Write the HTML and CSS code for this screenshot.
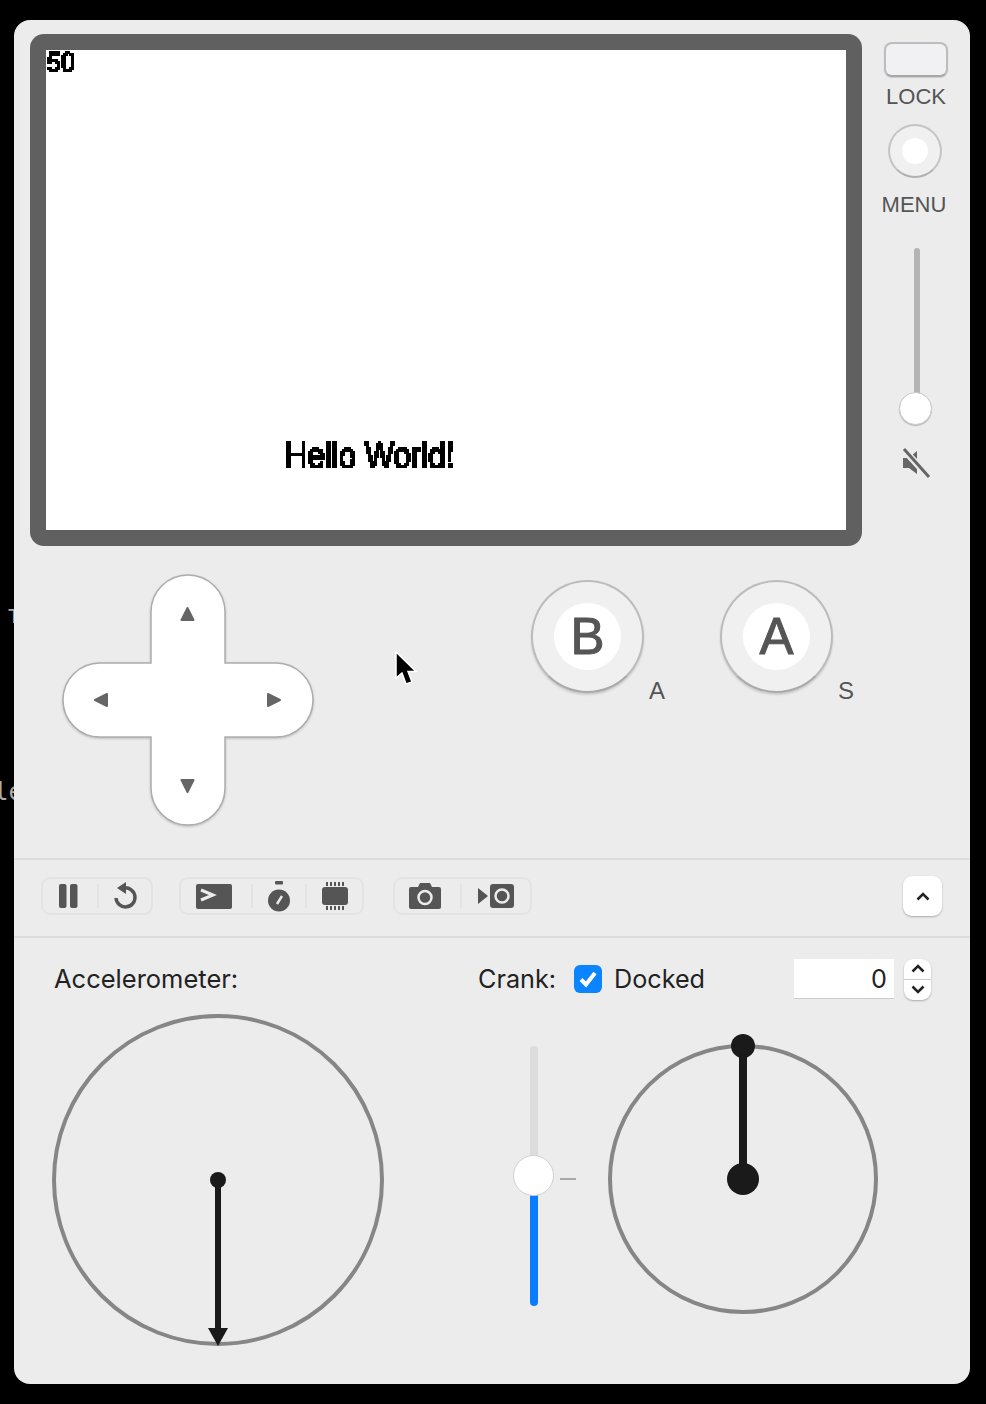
FILE: index.html
```html
<!DOCTYPE html>
<html>
<head>
<meta charset="utf-8">
<title>Playdate Simulator</title>
<link rel="stylesheet" href="styles.css">
</head>
<body>

<svg class="defs" width="0" height="0">
  <filter id="pixelate" x="0" y="0" width="100%" height="100%" primitiveUnits="userSpaceOnUse" color-interpolation-filters="sRGB">
    <feFlood x="0" y="0" width="1" height="1" flood-color="#000"/>
    <feComposite width="2" height="2"/>
    <feTile result="grid"/>
    <feComposite in="SourceAlpha" in2="grid" operator="in"/>
    <feMorphology operator="dilate" radius="1"/>
    <feComponentTransfer>
      <feFuncA type="discrete" tableValues="0 0 1 1"/>
    </feComponentTransfer>
  </filter>
</svg>

<div class="behind behind-t">T</div>
<div class="behind behind-le">le</div>

<div class="window">

  <div class="device">
    <div class="screen-row">
      <div class="bezel">
        <div class="screen">
          <div class="fps"><span>50</span></div>
          <div class="hello"><span>Hello World!</span></div>
        </div>
      </div>
      <div class="side">
        <div class="lock-btn"></div>
        <div class="side-label lock-label">LOCK</div>
        <div class="menu-btn"><div class="menu-dot"></div></div>
        <div class="side-label menu-label">MENU</div>
        <div class="volume">
          <div class="volume-track"></div>
          <div class="volume-thumb"></div>
        </div>
        <svg class="mute" width="30" height="32" viewBox="0 0 30 32">
          <path d="M2 11H8L16 4V27L8 21H2Z" fill="#666"/>
          <path d="M3 3L27 29" stroke="#ececec" stroke-width="7"/>
          <path d="M3 2L28 30" stroke="#666" stroke-width="3"/>
        </svg>
      </div>
    </div>

    <div class="controls">
      <svg class="dpad" width="252" height="254" viewBox="0 0 252 254">
        <path class="dpad-body" d="M89 38A37 37 0 0 1 163 38V89H214A37 37 0 0 1 214 163H163V214A37 37 0 0 1 89 214V163H38A37 37 0 0 1 38 89H89Z"/>
        <g class="dpad-arrows">
          <path d="M125.500 34L131.500 46H119.500Z"/>
          <path d="M33 126L45 120V132Z"/>
          <path d="M218 126L206 120V132Z"/>
          <path d="M125.500 218L119.500 206H131.500Z"/>
        </g>
      </svg>
      <div class="face-buttons">
        <div class="face">
          <div class="face-btn"><div class="face-cap">B</div></div>
          <div class="face-key">A</div>
        </div>
        <div class="face">
          <div class="face-btn"><div class="face-cap">A</div></div>
          <div class="face-key">S</div>
        </div>
      </div>
    </div>

    <svg class="cursor" width="24" height="36" viewBox="0 0 24 36">
      <path d="M2 1V27L8 22L12 33L18 31L14 20.500H22Z" fill="#000" stroke="#fff" stroke-width="1.500"/>
    </svg>
  </div>

  <div class="toolbar">
    <div class="tool-group">
      <div class="tool w54 lean">
        <svg width="20" height="24" viewBox="0 0 20 24"><rect x="1" y="0" width="7.500" height="24" rx="2"/><rect x="12" y="0" width="7.500" height="24" rx="2"/></svg>
      </div>
      <div class="tool w54 sep">
        <svg width="24" height="28" viewBox="0 0 24 28">
          <path class="stroke" d="M11 6A9.500 9.500 0 1 1 3 16"/>
          <path d="M13 0V12L4 6Z"/>
        </svg>
      </div>
    </div>
    <div class="tool-group">
      <div class="tool w70 lean">
        <svg width="36" height="25" viewBox="0 0 36 25">
          <rect width="36" height="25" rx="2"/>
          <path class="cut cut-bold" d="M5 6L17 11L5 16" />
        </svg>
      </div>
      <div class="tool w54 sep">
        <svg width="22" height="31" viewBox="0 0 22 31">
          <rect x="7" y="0" width="8" height="3.500" rx="1"/>
          <circle cx="11" cy="19.500" r="11"/>
          <path class="cut" d="M9 23L14 15"/>
        </svg>
      </div>
      <div class="tool w57 sep">
        <svg width="26" height="28" viewBox="0 0 26 28">
          <rect x="0" y="5" width="26" height="18" rx="3"/>
          <path class="ticks" d="M5 0V4M9 0V4M13 0V4M17 0V4M21 0V4M5 24V28M9 24V28M13 24V28M17 24V28M21 24V28"/>
        </svg>
      </div>
    </div>
    <div class="tool-group tool-group-media">
      <div class="tool w65 lean-more">
        <svg width="32" height="26" viewBox="0 0 32 26">
          <path d="M2 4H9L11 0H21L23 4H30Q32 4 32 6V24Q32 26 30 26H2Q0 26 0 24V6Q0 4 2 4Z"/>
          <circle class="cut" cx="16" cy="14.500" r="6.500"/>
        </svg>
      </div>
      <div class="tool w70 sep">
        <svg width="36" height="24" viewBox="0 0 36 24">
          <path d="M0 4L10 12L0 20Z"/>
          <rect x="12" y="0" width="24" height="24" rx="3"/>
          <circle class="cut" cx="24" cy="12" r="6.500"/>
        </svg>
      </div>
    </div>
    <div class="expand">
      <svg width="14" height="9" viewBox="0 0 14 9"><path d="M1.500 7.500L7 2L12.500 7.500" fill="none" stroke="#222" stroke-width="2.500"/></svg>
    </div>
  </div>

  <div class="panel">
    <div class="accel">
      <div class="panel-label accel-label">Accelerometer:</div>
      <svg class="accel-dial" width="332" height="332" viewBox="0 0 332 332">
        <circle cx="166" cy="166" r="164" fill="none" stroke="#868686" stroke-width="4"/>
        <circle cx="166" cy="166" r="8" fill="#1a1a1a"/>
        <path d="M166 166V316" stroke="#1a1a1a" stroke-width="6"/>
        <path d="M156 314H176L166 332Z" fill="#1a1a1a"/>
      </svg>
    </div>
    <div class="crank">
      <div class="crank-head">
        <div class="panel-label">Crank:</div>
        <div class="check">
          <svg width="20" height="18" viewBox="0 0 20 18"><path d="M3 9.500L8 14.500L17 3" fill="none" stroke="#fff" stroke-width="4"/></svg>
        </div>
        <div class="panel-label">Docked</div>
        <div class="angle">0</div>
        <div class="stepper">
          <div class="step">
            <svg width="14" height="9" viewBox="0 0 14 9"><path d="M1.500 7.500L7 2L12.500 7.500" fill="none" stroke="#222" stroke-width="2.500"/></svg>
          </div>
          <div class="step step-down">
            <svg width="14" height="9" viewBox="0 0 14 9"><path d="M1.500 1.500L7 7L12.500 1.500" fill="none" stroke="#222" stroke-width="2.500"/></svg>
          </div>
        </div>
      </div>
      <div class="crank-body">
        <div class="crank-slider">
          <div class="crank-track"></div>
          <div class="crank-fill"></div>
          <div class="crank-thumb"></div>
        </div>
        <div class="crank-tick"></div>
        <svg class="crank-dial" width="272" height="284" viewBox="0 0 272 284">
          <circle cx="136" cy="147" r="133" fill="none" stroke="#868686" stroke-width="4"/>
          <path d="M136 147V14" stroke="#1a1a1a" stroke-width="8"/>
          <circle cx="136" cy="14" r="12" fill="#1a1a1a"/>
          <circle cx="136" cy="147" r="16" fill="#1a1a1a"/>
        </svg>
      </div>
    </div>
  </div>

</div>

</body>
</html>
```

FILE: styles.css
```css
* { box-sizing: border-box; }

html, body {
  margin: 0;
  height: 1404px;
  overflow: hidden;
}

body {
  position: relative;
  background: #000;
  padding: 20px 16px 20px 14px;
  font-family: "Liberation Sans", Arial, sans-serif;
}

.defs { position: absolute; }

/* terminal text peeking out from behind the window */
.behind {
  position: absolute;
  font-family: "DejaVu Sans Mono", monospace;
  color: #aaa;
}
.behind-t { left: 8px; top: 604px; font-size: 20px; line-height: 24px; }
.behind-le { left: -6px; top: 777px; font-size: 24px; line-height: 30px; }

.window {
  position: relative;
  height: 1364px;
  background: #ececec;
  border-radius: 16px;
  overflow: hidden;
}

/* top part */
.device { position: relative; height: 838px; }

.screen-row {
  display: flex;
  align-items: flex-start;
  padding: 14px 0 0 16px;
}

.bezel {
  width: 832px;
  height: 512px;
  padding: 16px;
  background: #606060;
  border-radius: 14px;
}

.screen {
  position: relative;
  width: 800px;
  height: 480px;
  background: #fff;
  overflow: hidden;
}

.fps, .hello {
  position: absolute;
  filter: url(#pixelate);
  color: #000;
}
.fps {
  left: 0;
  top: 0;
  width: 40px;
  height: 32px;
  font-size: 25px;
  -webkit-text-stroke: 0.4px #000;
}
.fps span {
  display: block;
  transform-origin: 0 0;
  transform: translate(1px, -1px) scaleY(1.16);
  line-height: 22px;
}
.hello {
  left: 239px;
  top: 388px;
  width: 176px;
  height: 40px;
  font-size: 31.200px;
  -webkit-text-stroke: 0.6px #000;
  white-space: nowrap;
}
.hello span {
  display: block;
  transform-origin: 0 0;
  transform: scaleY(1.2);
  line-height: 30px;
}

.side {
  flex: 1;
  display: flex;
  flex-direction: column;
  align-items: center;
  margin-top: 8px;
}

.lock-btn {
  width: 64px;
  height: 35px;
  background: #f1f1f3;
  border: 2px solid #bdbdbd;
  border-bottom-color: #a8a8a8;
  border-radius: 8px;
  box-shadow: 0 1px 1px #ccc;
}

.side-label {
  font-size: 22px;
  line-height: 26px;
  color: #555;
}
.lock-label { margin-top: 7px; }
.menu-label { margin-top: 14px; margin-right: 4px; }

.menu-btn {
  display: flex;
  align-items: center;
  justify-content: center;
  width: 54px;
  height: 54px;
  margin-top: 14px;
  margin-right: 2px;
  background: #f0f0f0;
  border: 2px solid #c4c4c4;
  border-bottom-color: #b0b0b0;
  border-radius: 50%;
}
.menu-dot {
  width: 26px;
  height: 26px;
  background: #fff;
  border-radius: 50%;
}

.volume {
  position: relative;
  width: 34px;
  height: 176px;
  margin-top: 30px;
}
.volume-track {
  width: 6px;
  height: 150px;
  margin-left: 15px;
  background: #b4b4b4;
  border-radius: 3px;
}
.volume-thumb {
  position: absolute;
  left: 0;
  top: 144px;
  width: 33px;
  height: 33px;
  background: #fff;
  border: 1px solid #c8c8c8;
  border-radius: 50%;
  box-shadow: 0 1px 1px #bbb;
}
.mute { margin-top: 23px; }

.controls {
  display: flex;
  align-items: flex-start;
}

.dpad {
  margin: 28px 0 0 48px;
  overflow: visible;
}
.dpad-body {
  fill: #fff;
  stroke: #adadad;
  stroke-width: 1.500;
  filter: drop-shadow(0 1px 1px #bbb);
}
.dpad-arrows path {
  fill: #666;
  stroke: #666;
  stroke-width: 2;
  stroke-linejoin: round;
}

.face-buttons {
  display: flex;
  gap: 55px;
  margin: 34px 0 0 217px;
}
.face {
  display: flex;
  align-items: flex-end;
  gap: 5px;
}
.face-btn {
  display: flex;
  align-items: center;
  justify-content: center;
  width: 113px;
  height: 113px;
  background: #f0f0f0;
  border: 2px solid #bcbcbc;
  border-bottom-color: #aaa;
  border-radius: 50%;
  box-shadow: 0 2px 2px #ccc;
}
.face-cap {
  width: 67px;
  height: 67px;
  background: #fff;
  border-radius: 50%;
  color: #555;
  font-size: 51px;
  -webkit-text-stroke: 1px #555;
  line-height: 67px;
  text-align: center;
}
.face-key {
  width: 16px;
  margin-bottom: -11px;
  color: #555;
  font-size: 24px;
  line-height: 26px;
  text-align: center;
}

.cursor {
  position: absolute;
  left: 380px;
  top: 631px;
}

/* toolbar */
.toolbar {
  display: flex;
  align-items: center;
  gap: 26px;
  height: 80px;
  padding: 0 27px 4px;
  border-top: 2px solid #dcdcdc;
  border-bottom: 2px solid #dcdcdc;
}
.tool-group {
  display: flex;
  align-items: center;
  height: 38px;
  border: 2px solid #e3e3e3;
  border-radius: 9px;
}
.tool-group-media { margin-left: 3px; }
.tool {
  display: flex;
  align-items: center;
  justify-content: center;
  height: 24px;
}
.lean { padding-right: 4px; }
.lean-more { padding-right: 6px; }
.w54 { width: 54px; }
.w57 { width: 57px; }
.w65 { width: 65px; }
.w70 { width: 70px; }
.sep { border-left: 2px solid #e3e3e3; }
.tool svg { fill: #555; overflow: visible; flex: none; }
.tool .stroke { fill: none; stroke: #555; stroke-width: 3.500; }
.tool .cut { fill: none; stroke: #ececec; stroke-width: 2.500; }
.tool .cut-bold { stroke-width: 3; }
.tool .ticks { fill: none; stroke: #555; stroke-width: 2; }

.expand {
  display: flex;
  align-items: center;
  justify-content: center;
  width: 39px;
  height: 40px;
  margin-left: auto;
  margin-right: 1px;
  background: #fff;
  border-radius: 9px;
  box-shadow: 0 1px 2px #aaa;
}

/* bottom part */
.panel { display: flex; padding-top: 1px; }

.panel-label {
  color: #222;
  font-family: Inter, "Liberation Sans", sans-serif;
  font-size: 25.200px;
  line-height: 30px;
}

.accel {
  width: 464px;
  padding: 25px 0 0 38px;
}
.accel-label { margin-left: 2px; font-size: 25.500px; }
.accel-dial { display: block; margin-top: 20px; overflow: visible; }

.crank { flex: 1; min-width: 0; }

.crank-head {
  display: flex;
  align-items: center;
  height: 42px;
  margin-top: 19px;
}
.check {
  display: flex;
  align-items: center;
  justify-content: center;
  width: 28px;
  height: 28px;
  margin: 0 12px 0 18px;
  background: #0a84ff;
  border-radius: 6px;
}
.angle {
  width: 100px;
  height: 40px;
  margin-left: auto;
  padding-right: 7px;
  background: #fff;
  border-bottom: 1px solid #ccc;
  color: #222;
  font-family: Inter, "Liberation Sans", sans-serif;
  font-size: 25.200px;
  line-height: 40px;
  text-align: right;
}
.stepper {
  width: 27px;
  height: 41px;
  margin-left: 10px;
  margin-right: 39px;
  background: #fff;
  border-radius: 9px;
  box-shadow: 0 1px 2px #aaa;
}
.step {
  display: flex;
  align-items: center;
  justify-content: center;
  height: 20px;
}
.step-down { height: 21px; border-top: 1px solid #ccc; }

.crank-body {
  display: flex;
  align-items: flex-start;
  margin-top: 32px;
}
.crank-slider {
  position: relative;
  width: 41px;
  height: 260px;
  margin: 14px 0 0 35px;
}
.crank-track {
  position: absolute;
  left: 17px;
  top: 0;
  width: 8px;
  height: 120px;
  background: #dcdcdc;
  border-radius: 4px 4px 0 0;
}
.crank-fill {
  position: absolute;
  left: 17px;
  top: 130px;
  width: 8px;
  height: 130px;
  background: #0a7cff;
  border-radius: 0 0 4px 4px;
}
.crank-thumb {
  position: absolute;
  left: 0;
  top: 109px;
  width: 41px;
  height: 41px;
  background: #fff;
  border: 1px solid #cfcfcf;
  border-radius: 50%;
}
.crank-tick {
  width: 16px;
  height: 2px;
  margin: 146px 31px 0 6px;
  background: #aaa;
}
.crank-dial { display: block; overflow: visible; }
```
